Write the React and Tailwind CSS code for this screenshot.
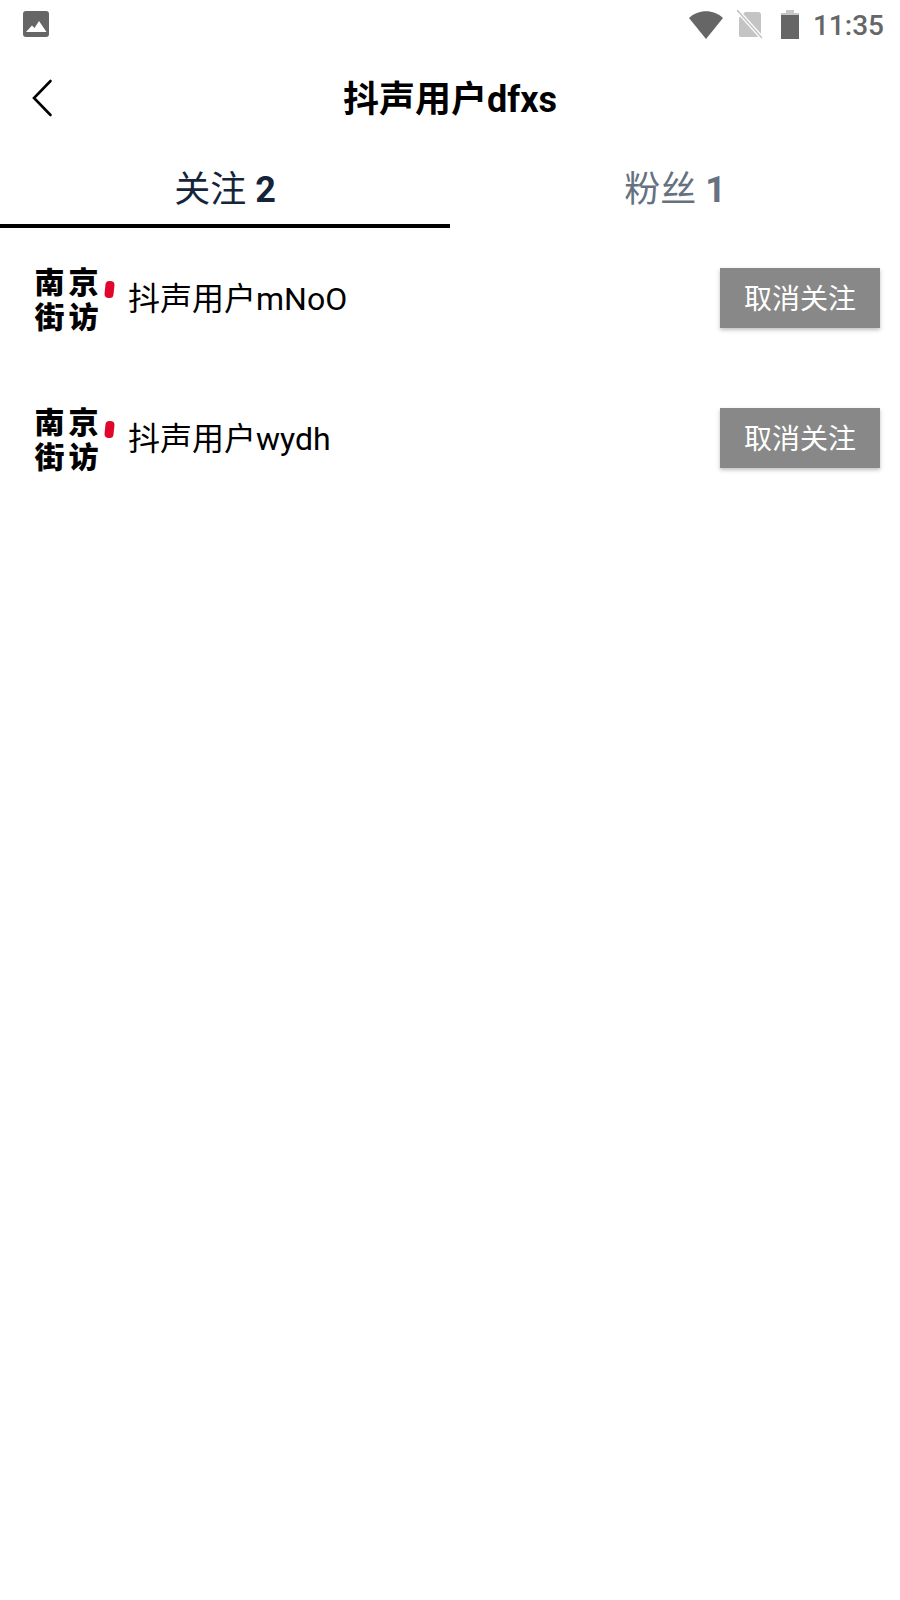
import React from 'react';

const cjk = { fontFamily: '"Roboto", "Noto Sans CJK SC", sans-serif' };

const following = [
  { id: 1, name: '抖声用户mNoO' },
  { id: 2, name: '抖声用户wydh' },
];

const Logo = () => (
  <div className="w-[84px] h-[70px] shrink-0 flex items-center gap-[1px]">
    <div
      className="w-[71px] flex flex-col text-black font-black text-[30px] leading-[35px] tracking-[4px] text-center whitespace-nowrap"
      style={{ fontFamily: '"Noto Sans CJK JP", "Noto Sans CJK SC", sans-serif' }}
    >
      <span>南京</span>
      <span>街访</span>
    </div>
    <div className="w-[9px] h-[17px] mb-[18px] rotate-6 rounded-[4px] bg-[#e0062c]" />
  </div>
);

const Row = ({ name }) => (
  <div className="h-[140px] flex items-center pl-[33px] pr-[20px]">
    <Logo />
    <span className="ml-[11px] pt-[2px] flex-1 text-[32px] text-black">{name}</span>
    <button className="w-[160px] h-[60px] pt-[4px] bg-[#888888] text-white text-[28px] shadow-[0_2px_4px_rgba(0,0,0,0.25)]">
      取消关注
    </button>
  </div>
);

const App = () => {
  return (
    <div className="w-[900px] h-[1600px] bg-white overflow-hidden" style={cjk}>
      {/* Status bar */}
      <div className="h-[48px] flex items-center pl-[23px] pr-[16px]">
        <svg width="26" height="26" viewBox="0 0 26 26" className="mb-[1px]">
          <rect width="26" height="26" rx="3" fill="#666666" />
          <path d="M3 21 L9 14.5 L11.5 17 L16 10 L23.5 21 Z" fill="#fff" />
        </svg>
        <div className="flex-1" />
        <svg width="34" height="28" viewBox="0 0 34 28" className="mb-[-1px]">
          <path d="M0 7 C9 -2 25 -2 34 7 L17 28 Z" fill="#666666" />
        </svg>
        <svg width="26" height="30" viewBox="0 0 26 30" className="ml-[14px]">
          <path d="M8 3 H21 Q24 3 24 6 V27 Q24 28 22 28 H4 Q2 28 2 27 V9 Z" fill="#c4c4c4" />
          <path d="M0 1 L25 29" stroke="#ffffff" strokeWidth="4" />
          <path d="M0 1 L25 29" stroke="#c4c4c4" strokeWidth="1.6" />
        </svg>
        <svg width="20" height="29" viewBox="0 0 20 29" className="ml-[17px]">
          <path d="M6 0 H14 V3 H19 V29 H1 V3 H6 Z" fill="#c8c8c8" />
          <rect x="1" y="5" width="18" height="24" fill="#666666" />
        </svg>
        <span className="ml-[13px] pt-[4px] text-[28px] font-medium text-[#666666]">11:35</span>
      </div>

      {/* Header */}
      <div className="h-[100px] relative flex items-center justify-center pt-[4px]">
        <svg width="22" height="38" viewBox="0 0 22 38" className="absolute left-[31px] top-[31px]">
          <path d="M19.5 2 L3 19 L19.5 36" fill="none" stroke="#000" strokeWidth="2.6" strokeLinecap="round" strokeLinejoin="miter" />
        </svg>
        <h1 className="text-[36px] font-bold text-black">抖声用户dfxs</h1>
      </div>

      {/* Tabs */}
      <div className="h-[80px] flex">
        <div className="w-1/2 pt-[8px] border-b-[4px] border-black flex items-center justify-center text-[36px] text-[#14253a]">
          关注&nbsp;<span className="font-bold">2</span>
        </div>
        <div className="w-1/2 pt-[8px] pb-[4px] flex items-center justify-center text-[36px] text-[#66727f]">
          粉丝&nbsp;<span className="font-bold">1</span>
        </div>
      </div>

      {/* List */}
      <div>
        {following.map((item) => (
          <Row key={item.id} name={item.name} />
        ))}
      </div>
    </div>
  );
};

export default App;
